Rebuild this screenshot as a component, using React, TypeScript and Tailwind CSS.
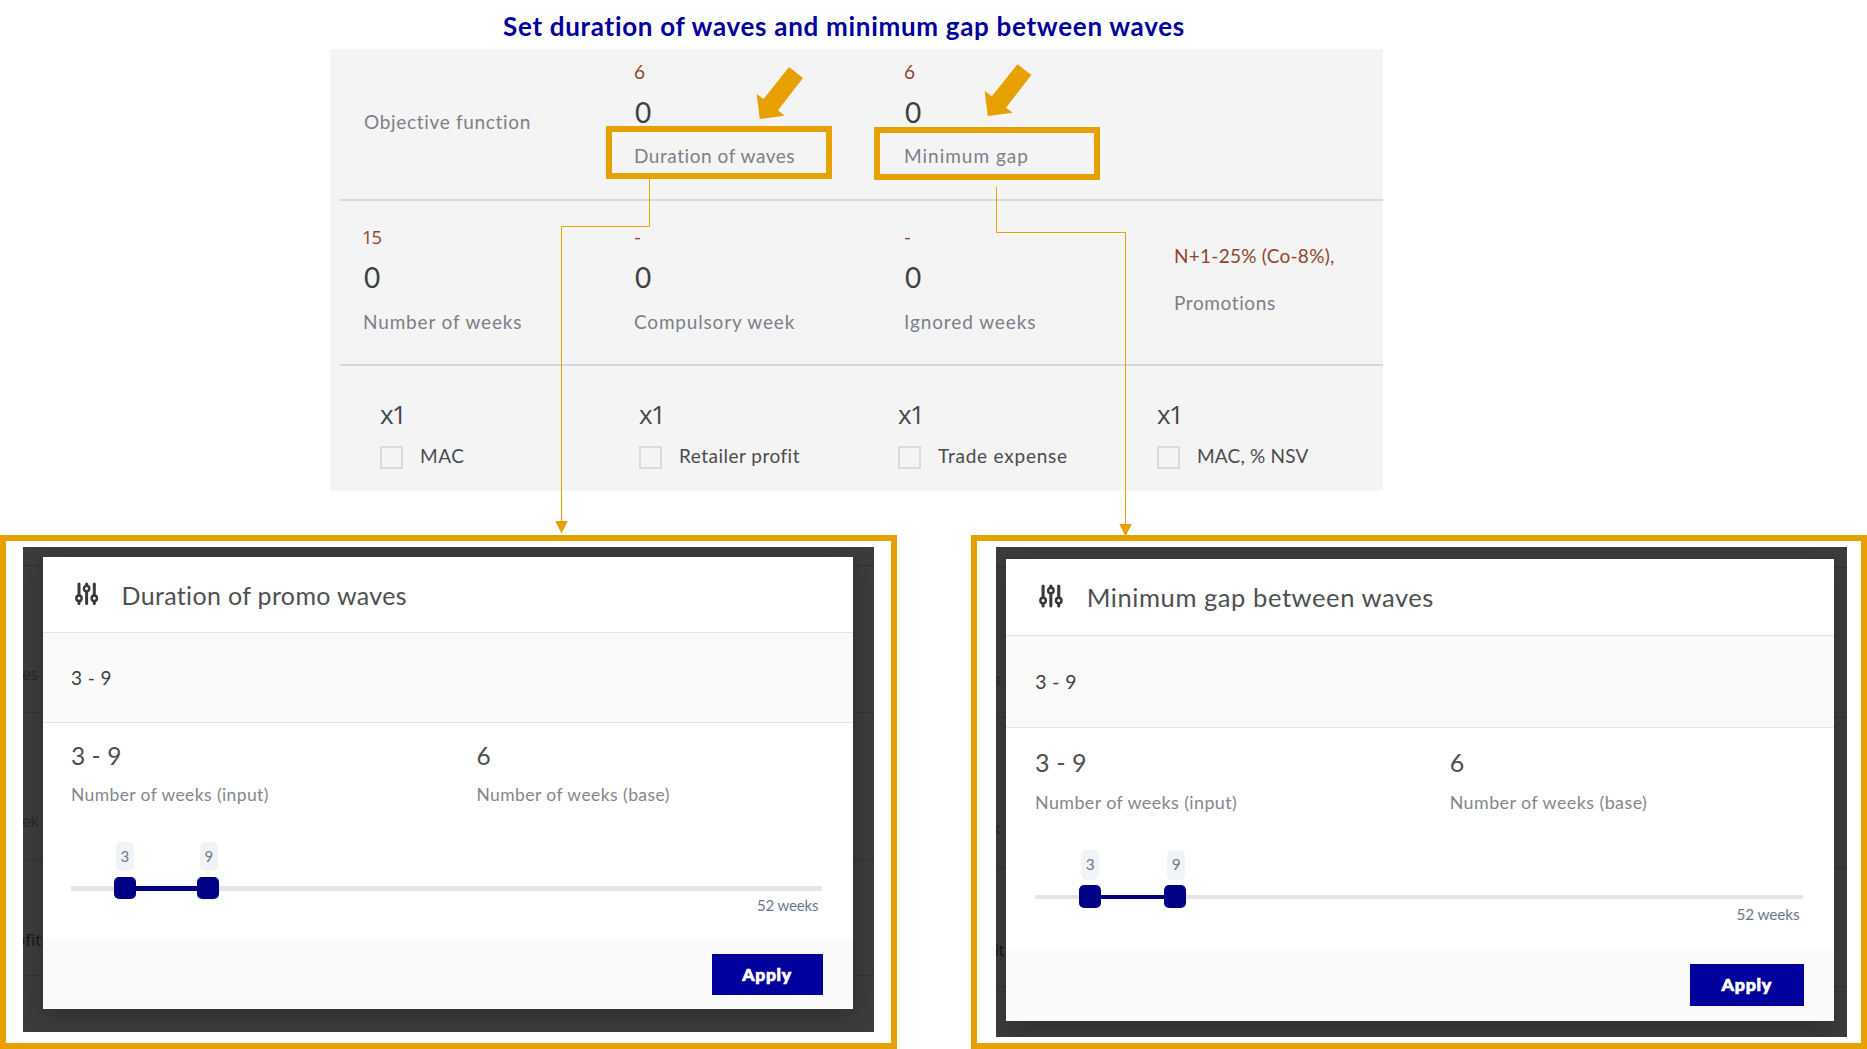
type Metric = { base?: string; value?: string; label: string; tracking: string; gap: string };

function MetricCell({ base, value, label, tracking, gap }: Metric) {
  return (
    <div className="flex flex-col">
      <span
        className={
          base === "15"
            ? "-ml-px h-6 font-['Open_Sans',sans-serif] text-[18.5px] leading-6 tracking-[-1.2px] text-[#92452c]"
            : "h-6 text-[19px] leading-6 text-[#92452c]"
        }
      >
        {base}
      </span>
      <span className="ml-px mt-[14px] h-7 text-[28px] leading-7 text-[#3d3f44]">{value}</span>
      <span className={"whitespace-nowrap text-[19px] leading-6 text-[#7d7f88] " + gap + " " + tracking}>{label}</span>
    </div>
  );
}

const objectives = [
  { label: "MAC", tracking: "tracking-[0.6px]" },
  { label: "Retailer profit", tracking: "tracking-[0.48px]" },
  { label: "Trade expense", tracking: "tracking-[0.78px]" },
  { label: "MAC, % NSV", tracking: "tracking-[0.2px]" },
];

function SettingsPanel() {
  return (
    <section className="ml-[330px] h-[442px] w-[1053px] bg-[#f4f4f4] pl-[10px]">
      <div className="grid h-[152px] grid-cols-[271px_270px_270px_1fr] border-b-2 border-[#d9d9da] pl-[23px] pt-[11px]">
        <span className="ml-px mt-[50px] whitespace-nowrap text-[19px] leading-6 tracking-[0.68px] text-[#7d7f88]">
          Objective function
        </span>
        <MetricCell base="6" value="0" label="Duration of waves" tracking="tracking-[0.55px]" gap="mt-[18px]" />
        <MetricCell base="6" value="0" label="Minimum gap" tracking="tracking-[1px]" gap="mt-[18px]" />
      </div>
      <div className="grid h-[165px] grid-cols-[271px_270px_270px_1fr] border-b-2 border-[#d6d7dc] pl-[23px] pt-6">
        <MetricCell base="15" value="0" label="Number of weeks" tracking="tracking-[0.85px]" gap="mt-[19px]" />
        <MetricCell base="-" value="0" label="Compulsory week" tracking="tracking-[0.82px]" gap="mt-[19px]" />
        <MetricCell base="-" value="0" label="Ignored weeks" tracking="tracking-[0.9px]" gap="mt-[19px]" />
        <div className="flex flex-col pt-[19px]">
          <span className="whitespace-nowrap text-[19px] leading-6 tracking-[0.26px] text-[#92452c]">
            N+1-25% (Co-8%),
          </span>
          <span className="mt-[23px] text-[19px] leading-6 tracking-[0.6px] text-[#7d7f88]">Promotions</span>
        </div>
      </div>
      <div className="grid grid-cols-[259px_259px_259px_1fr] pl-10 pt-[34px]">
        {objectives.map((o) => (
          <div key={o.label} className="flex flex-col">
            <span className="h-7 font-['Open_Sans',sans-serif] text-[26px] leading-7 tracking-[-1.5px] text-[#45464a]">
              x1
            </span>
            <label className="mt-[18px] flex items-start gap-[17px]">
              <span className="size-[23px] border-2 border-[#dadbde]" />
              <span className={"-mt-[2px] whitespace-nowrap text-[19px] leading-6 text-[#4a4b50] " + o.tracking}>
                {o.label}
              </span>
            </label>
          </div>
        ))}
      </div>
    </section>
  );
}

function SlidersIcon() {
  return (
    <svg className="mt-[25px] h-6 w-6 shrink-0" viewBox="0 0 24 24" fill="none" stroke="#38393b">
      <g strokeWidth="3" strokeLinecap="round">
        <path d="M4 2v11M4 19.5v2M11.6 2v1M11.6 10v11.4M19.3 2v11M19.3 19.5v2" />
      </g>
      <g strokeWidth="2.4">
        <circle cx="4" cy="16.2" r="2.7" />
        <circle cx="11.6" cy="6.4" r="2.7" />
        <circle cx="19.3" cy="16.2" r="2.7" />
      </g>
    </svg>
  );
}

function WeekSlider() {
  return (
    <div className="relative mt-[35px] h-[58px] w-[751px]">
      <div className="absolute left-0 top-[44px] h-[4.5px] w-full bg-[#e5e6ea]" />
      <div className="absolute left-[54px] top-[44px] h-[4.5px] w-[83px] bg-[#000087]" />
      <span className="absolute left-[45px] top-0 flex h-[29px] w-[18px] items-center justify-center rounded-[5px] bg-[#f2f3f6] text-[15px] text-[#6d7b93]">
        3
      </span>
      <span className="absolute left-[129px] top-0 flex h-[29px] w-[18px] items-center justify-center rounded-[5px] bg-[#f2f3f6] text-[15px] text-[#6d7b93]">
        9
      </span>
      <span className="absolute left-[43px] top-[34.5px] size-[22px] rounded-[5px] bg-[#000087]" />
      <span className="absolute left-[126px] top-[34.5px] size-[22px] rounded-[5px] bg-[#000087]" />
    </div>
  );
}

function RangeDialog({ title, className }: { title: string; className: string }) {
  return (
    <div className={"relative flex h-[452px] w-[810px] flex-col bg-white shadow-[0_8px_22px_rgba(0,0,0,0.22)] " + className}>
      <header className="flex h-[76px] border-b border-[#e3e3e4] pl-8">
        <SlidersIcon />
        <h2
          className={
            "ml-[23px] mt-[23px] whitespace-nowrap text-[25px] leading-[30px] text-[#4f5052] " +
            (title.startsWith("Min") ? "tracking-[0.54px]" : "tracking-[0.34px]")
          }
        >
          {title}
        </h2>
      </header>
      <div className="h-[90px] border-b border-[#e3e3e4] bg-[#fafafa] pl-[28.5px] pt-[33px] text-[19px] leading-6 tracking-[0.4px] text-[#3f4042]">
        3 - 9
      </div>
      <div className="h-[216px] pl-[28.4px] pt-[18px]">
        <div className="grid grid-cols-[405.5px_1fr]">
          <div>
            <p className="text-[24.5px] leading-[30px] tracking-[0.1px] text-[#4f5052]">3 - 9</p>
            <p className="mt-[12px] text-[17.5px] leading-6 tracking-[0.4px] text-[#85868c]">Number of weeks (input)</p>
          </div>
          <div>
            <p className="text-[24.5px] leading-[30px] text-[#4f5052]">6</p>
            <p className="mt-[12px] text-[17.5px] leading-6 tracking-[0.44px] text-[#85868c]">Number of weeks (base)</p>
          </div>
        </div>
        <WeekSlider />
        <p className="-mt-[4.5px] mr-[34px] text-right text-[15px] leading-[18px] tracking-[-0.12px] text-[#6a7791]">
          52 weeks
        </p>
      </div>
      <footer className="flex flex-1 justify-end bg-[#fafafa] pr-[30px] pt-[15px]">
        <button className="h-[40.5px] w-[111px] bg-[#00009c] text-[17.5px] font-black leading-[41px] tracking-[0.7px] text-white [-webkit-text-stroke:0.7px_white]">
          Apply
        </button>
      </footer>
    </div>
  );
}

function Rule({ className }: { className: string }) {
  return <div className={"absolute inset-x-0 h-px bg-[#323232] " + className} />;
}

function Backdrop({ text, className }: { text: string; className: string }) {
  return (
    <span className={"absolute font-['Open_Sans',sans-serif] leading-6 " + className}>
      {text}
    </span>
  );
}

function Annotations() {
  return (
    <>
      <div className="absolute left-[606px] top-[126px] h-[53px] w-[226px] border-6 border-[#e6a100]" />
      <div className="absolute left-[874px] top-[127px] h-[53px] w-[226px] border-6 border-[#e6a100]" />
      <svg className="pointer-events-none absolute left-0 top-0" width="1867" height="540" viewBox="0 0 1867 540">
        <g fill="#e6a100">
          <path d="M789 67 803 78 778 110.3 784.6 115.7 759.8 119 756.7 94 763.6 99Z" />
          <path d="M1017.5 64.3 1031.4 75 1006 107.7 1012.8 112.7 987.8 116 984.6 91 991.8 96.3Z" />
          <path d="M555.3 521h12.5l-6.3 12.5Z" />
          <path d="M1119.3 524h12.5l-6.3 12.5Z" />
        </g>
        <g fill="none" stroke="#e6a100" strokeWidth="1">
          <path d="M649.5 179V226.5H561.5V522" />
          <path d="M996.5 186.5V232.5H1125.5V525" />
        </g>
      </svg>
    </>
  );
}

export default function App() {
  return (
    <main className="relative h-[1049px] w-[1867px] overflow-hidden bg-white font-['Lato',sans-serif]">
      <h1 className="h-[49px] whitespace-nowrap pl-[503px] text-[26px] font-bold leading-[53px] tracking-[0.7px] text-[#00009c]">
        Set duration of waves and minimum gap between waves
      </h1>
      <SettingsPanel />
      <div className="mt-11 flex h-[514px] justify-between">
        <figure className="w-[897px] border-6 border-[#e6a100] pl-[17px] pt-[6px]">
          <div className="relative h-[485px] w-[851px] overflow-hidden bg-[#3c3c3c] pl-[19.5px] pt-[10px]">
            <Rule className="top-[18px]" />
            <Rule className="top-[165px]" />
            <Rule className="top-[312px]" />
            <Rule className="top-[428px]" />
            <Backdrop text="es" className="-left-px top-[115px] text-[16px] tracking-[-0.5px] text-[#252629]" />
            <Backdrop text="ek" className="-left-px top-[262px] text-[16px] tracking-[-0.8px] text-[#252629]" />
            <Backdrop text="ofit" className="-left-[8px] top-[381px] text-[17px] text-[#151618]" />
            <RangeDialog title="Duration of promo waves" className="" />
          </div>
        </figure>
        <figure className="w-[896px] border-6 border-[#e6a100] pl-[19px] pt-[6px]">
          <div className="relative h-[490px] w-[851px] overflow-hidden bg-[#3c3c3c] pl-[10px] pt-[11.5px]">
            <Rule className="top-[20px]" />
            <Rule className="top-[170px]" />
            <Rule className="top-[320px]" />
            <Rule className="top-[439px]" />
            <Backdrop text="s" className="-left-[2px] top-[120px] text-[15px] text-[#252629]" />
            <Backdrop text="k" className="-left-[4px] top-[269px] text-[16px] text-[#252629]" />
            <Backdrop text="it" className="-left-px top-[391px] text-[16px] tracking-[-0.5px] text-[#151618]" />
            <RangeDialog title="Minimum gap between waves" className="[zoom:1.0225]" />
          </div>
        </figure>
      </div>
      <Annotations />
    </main>
  );
}
